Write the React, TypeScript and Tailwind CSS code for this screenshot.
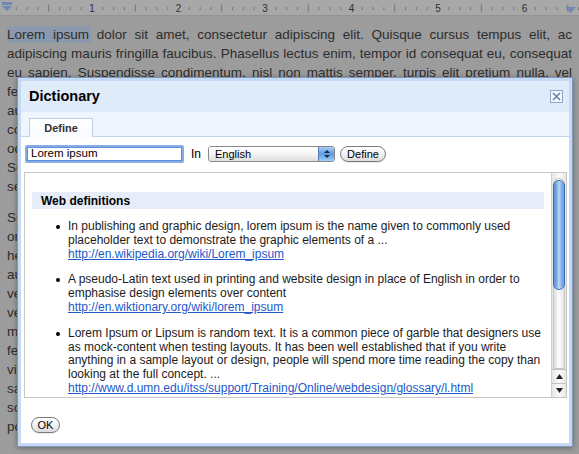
import type { ReactNode } from "react";

// ─── Background document ──────────────────────────────────

const PARA_ONE = [
  "adipiscing mauris fringilla faucibus. Phasellus lectus enim, tempor id consequat eu, consequat",
  "eu sapien. Suspendisse condimentum, nisl non mattis semper, turpis elit pretium nulla, vel",
  "fermentum nunc arcu sed sapien. Nulla facilisi. Morbi commodo tincidunt mauris, et rutrum mi",
  "auctor ut. Maecenas ullamcorper lectus vitae nibh varius a tempor neque pulvinar. Praesent",
  "commodo dolor at mauris hendrerit eleifend. Nam volutpat, nulla at sagittis euismod, velit",
  "odio porta augue, ut facilisis justo sapien vitae nibh. Integer posuere tortor sit amet sem",
  "Sed in eros sed dolor faucibus molestie sit amet eget nisl. Aliquam erat volutpat cras nunc",
];

const PARA_TWO = [
  "Suspendisse potenti. Vivamus a lacus quis diam dignissim pharetra in ut augue. Donec nec",
  "orci id enim tristique mattis. Cras iaculis, libero non sollicitudin rutrum, metus tortor vel",
  "hendrerit neque, in viverra ipsum est quis urna. Pellentesque habitant morbi tristique senectus",
  "augue et netus et malesuada fames ac turpis egestas. Aenean at velit nibh, et lacinia lorem",
  "velit. Etiam ultricies, orci vitae sodales mollis, mi metus volutpat odio, ut dictum nunc eros",
  "vestibulum dui. Nulla sed tortor vel urna placerat pellentesque non quis lorem nam turpis",
  "mi, faucibus eget vehicula nec, interdum at orci. Phasellus dignissim lacinia purus quis est",
  "felis. Vestibulum ante ipsum primis in faucibus orci luctus et ultrices posuere cubilia curae",
  "vitae lorem. Proin tempor eleifend sem at malesuada. Suspendisse nec mi at risus vehicula",
  "sapien. Cras tristique commodo ante, at sollicitudin lectus dignissim id. Aenean semper dui",
  "scelerisque lorem aliquet eget tincidunt massa feugiat. Vivamus dapibus justo vel quam nunc",
  "porta est, in semper magna elementum quis. Integer vitae augue erat, eget feugiat lacus",
];

function DocLine({ children }: { children: ReactNode }) {
  return (
    <div className="h-[19px] overflow-hidden text-justify [text-align-last:justify]">
      {children}
    </div>
  );
}

function Ruler() {
  const marks = [];
  for (let k = 1; k <= 53; k++) {
    const x = 5.5 + k * 10.8125;
    if (k % 8 === 0) {
      marks.push(
        <text key={k} x={x} y={11.5} textAnchor="middle" fontSize="10" fill="#2f2f2f">
          {k / 8}
        </text>
      );
    } else if (k % 4 === 0) {
      marks.push(<line key={k} x1={x} x2={x} y1={4.5} y2={11.5} stroke="#707070" strokeWidth="1" />);
    } else {
      marks.push(<line key={k} x1={x} x2={x} y1={7} y2={10} stroke="#7a7a7a" strokeWidth="1" />);
    }
  }
  return (
    <div className="h-[16px] bg-[#a8a8a8] border-b border-[#939393]">
      <svg width="579" height="15" viewBox="0 0 579 15" className="block">
        {marks}
        <rect x="2" y="2" width="10" height="3" fill="#6f87b4" />
        <path d="M2 6 L12 6 L7 11 Z" fill="#6f87b4" />
        <path d="M565 7 L576 7 L570.5 13 Z" fill="#6f87b4" />
      </svg>
    </div>
  );
}

// ─── Aqua controls ────────────────────────────────────────

function PillButton({ children, className }: { children: ReactNode; className?: string }) {
  return (
    <div
      className={
        "flex items-center justify-center h-[16px] rounded-full border border-[#7c7c7c] bg-gradient-to-b from-white via-[#f2f2f2] to-[#dcdcdc] text-[11px] text-black shadow-[0_1px_0_rgba(0,0,0,0.08)] " +
        (className ?? "")
      }
    >
      {children}
    </div>
  );
}

function SelectBox() {
  return (
    <div className="flex h-[16px] w-[127px] ml-[7px] rounded-[3px] border border-[#8a8a8a] overflow-hidden">
      <div className="flex-1 flex items-center pl-[6px] bg-gradient-to-b from-white via-[#f4f4f4] to-[#dedede] text-[11px] text-black">
        English
      </div>
      <div className="w-[16px] flex flex-col items-center justify-center gap-[2px] border-l border-[#5b7fb8] bg-gradient-to-b from-[#a9cdf6] via-[#5d9ae6] to-[#9fd0fb]">
        <svg width="6" height="3" viewBox="0 0 6 3" className="block">
          <path d="M0 3 L3 0 L6 3 Z" fill="#1c2a40" />
        </svg>
        <svg width="6" height="3" viewBox="0 0 6 3" className="block">
          <path d="M0 0 L6 0 L3 3 Z" fill="#1c2a40" />
        </svg>
      </div>
    </div>
  );
}

function Scrollbar() {
  return (
    <div className="w-[15px] flex flex-col border-l border-[#cfcfcf] bg-gradient-to-r from-[#e6e6e6] via-[#fafafa] to-[#e8e8e8]">
      <div className="relative flex-1 mx-[1px] mt-[5px] rounded-t-full rounded-b-[6px] border border-[#c6c6c6] bg-gradient-to-r from-[#dcdcdc] via-white to-[#e2e2e2]">
        <div className="absolute left-[-1px] right-[-1px] top-[1px] h-[110px] rounded-full border border-[#3a68ad] bg-gradient-to-r from-[#3f78cc] via-[#b9d8f8] to-[#4f8ade] shadow-[inset_0_0_2px_rgba(255,255,255,0.7)]" />
      </div>
      <div className="h-[14px] flex items-center justify-center border-t border-[#c4c4c4]">
        <svg width="7" height="5" viewBox="0 0 7 5" className="block">
          <path d="M0 5 L3.5 0 L7 5 Z" fill="#222" />
        </svg>
      </div>
      <div className="h-[14px] flex items-center justify-center border-t border-[#c4c4c4]">
        <svg width="7" height="5" viewBox="0 0 7 5" className="block">
          <path d="M0 0 L7 0 L3.5 5 Z" fill="#222" />
        </svg>
      </div>
    </div>
  );
}

// ─── Definitions ──────────────────────────────────────────

const DEFINITIONS = [
  {
    lines: [
      "In publishing and graphic design, lorem ipsum is the name given to commonly used",
      "placeholder text to demonstrate the graphic elements of a ...",
    ],
    link: "http://en.wikipedia.org/wiki/Lorem_ipsum",
  },
  {
    lines: [
      "A pseudo-Latin text used in printing and website design in place of English in order to",
      "emphasise design elements over content",
    ],
    link: "http://en.wiktionary.org/wiki/lorem_ipsum",
  },
  {
    lines: [
      "Lorem Ipsum or Lipsum is random text. It is a common piece of garble that designers use",
      "as mock-content when testing layouts. It has been well established that if you write",
      "anything in a sample layout or design, people will spend more time reading the copy than",
      "looking at the full concept. ...",
    ],
    link: "http://www.d.umn.edu/itss/support/Training/Online/webdesign/glossary/l.html",
  },
];

function Dictionary() {
  return (
    <div className="absolute left-[17px] top-[77px] w-[556px] h-[370px] border border-[#8196b8] bg-[#c4d9f4] p-[3px] shadow-[0_1px_5px_rgba(0,0,0,0.35)]">
      <div className="flex flex-col h-full bg-white">
        {/* title bar */}
        <div className="h-[31px] flex items-center justify-between pl-[8px] pr-[6px] bg-[#e0ebfa]">
          <span className="text-[14.5px] font-bold text-black">Dictionary</span>
          <div className="w-[13px] h-[13px] flex items-center justify-center border border-[#8ea3c5] bg-[#f3f7fd] -mt-px">
            <svg width="9" height="9" viewBox="0 0 9 9" className="block">
              <path d="M1 1 L8 8 M8 1 L1 8" stroke="#6a82ab" strokeWidth="1.6" />
            </svg>
          </div>
        </div>

        {/* tabs */}
        <div className="h-[25px] flex items-end pl-[8px] bg-[#eff5fd] border-b border-[#c3d6ef]">
          <div className="w-[64px] h-[19px] -mb-px flex items-center justify-center border border-b-0 border-[#bcd0ea] bg-gradient-to-b from-white to-[#f7faff] text-[11px] font-bold text-[#333]">
            Define
          </div>
        </div>

        {/* lookup form */}
        <div className="flex items-center pl-[4px] mt-[8px]">
          <div className="w-[159px] h-[18px] flex items-center pl-[4px] border-2 border-[#86ade4] rounded-[2px] shadow-[inset_0_0_0_1px_#5f8fd6] text-[11.5px] text-black">
            Lorem ipsum
          </div>
          <span className="ml-[7px] text-[12px] text-black">In</span>
          <SelectBox />
          <PillButton className="ml-[5px] w-[46px]">Define</PillButton>
        </div>

        {/* results */}
        <div className="flex h-[226px] mt-[9px] ml-[3px] mr-[2px] border border-[#c6c6c6]">
          <div className="flex-1 overflow-hidden">
            <div className="ml-[7px] mr-[7px] mt-[19px] h-[17px] flex items-center pl-[9px] bg-[#e6edf9] text-[12px] font-bold text-black">
              Web definitions
            </div>
            <ul className="mt-[11px] flex flex-col gap-[12px]">
              {DEFINITIONS.map((d) => (
                <li key={d.link} className="flex pl-[31px] text-[12px] leading-[13.8px] text-[#1c1c1c]">
                  <span className="w-[12px] shrink-0 pt-[5px]">
                    <span className="block w-[4px] h-[4px] rounded-full bg-black" />
                  </span>
                  <div className="whitespace-nowrap">
                    {d.lines.map((l) => (
                      <div key={l}>{l}</div>
                    ))}
                    <div className="text-[#2358c9] underline">{d.link}</div>
                  </div>
                </li>
              ))}
            </ul>
          </div>
          <Scrollbar />
        </div>

        <div className="mt-[19px] ml-[10px]">
          <PillButton className="w-[29px]">OK</PillButton>
        </div>
      </div>
    </div>
  );
}

export default function App() {
  return (
    <div className="relative w-[579px] h-[454px] overflow-hidden bg-[#9c9c9c] font-['Liberation_Sans',Arial,sans-serif]">
      <Ruler />
      <div className="pt-[9px] px-[7px] text-[13.5px] text-[#2c2c2c]">
        <DocLine>
          <span className="bg-[#8c99ad] px-[2px] -mx-[2px] py-[1px]">Lorem ipsum</span> dolor sit amet,
          consectetur adipiscing elit. Quisque cursus tempus elit, ac
        </DocLine>
        {PARA_ONE.map((l) => (
          <DocLine key={l}>{l}</DocLine>
        ))}
        <div className="h-[19px] overflow-hidden">sem quis neque viverra.</div>
        <div className="mt-[12px]">
          {PARA_TWO.map((l) => (
            <DocLine key={l}>{l}</DocLine>
          ))}
        </div>
      </div>
      <Dictionary />
    </div>
  );
}
